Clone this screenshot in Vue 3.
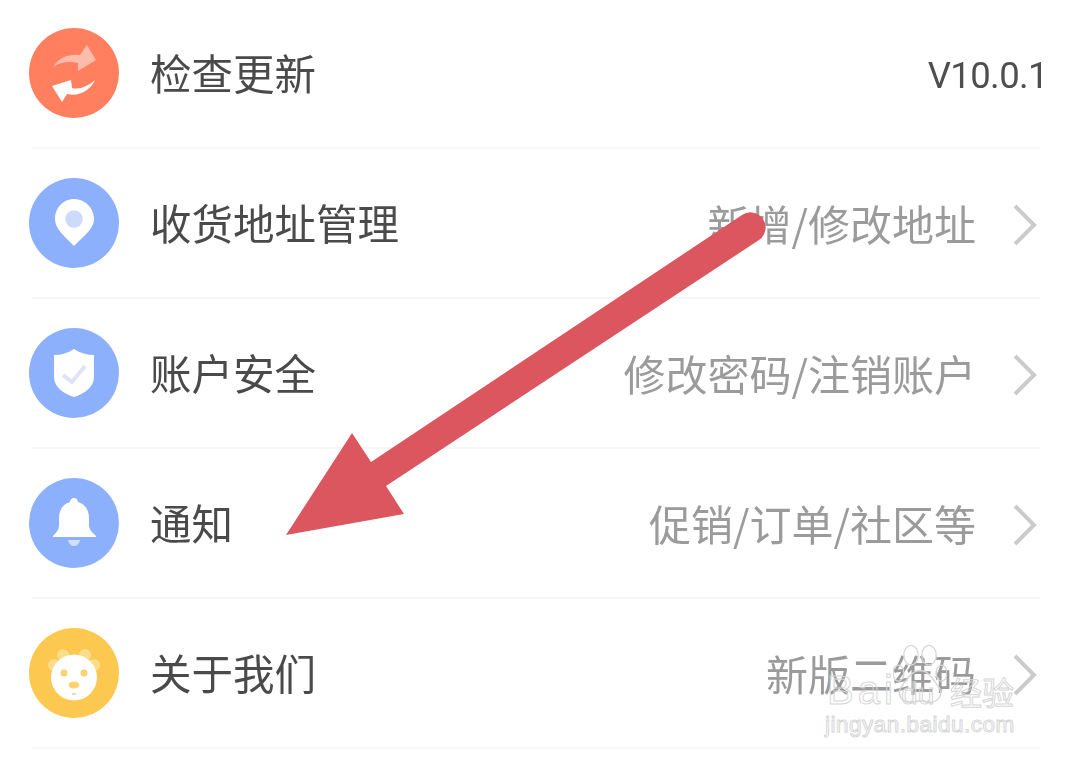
<script setup>
const rows = [
  { id: 'refresh', title: '检查更新', value: 'V10.0.1', version: true },
  { id: 'pin', title: '收货地址管理', value: '新增/修改地址' },
  { id: 'shield', title: '账户安全', value: '修改密码/注销账户' },
  { id: 'bell', title: '通知', value: '促销/订单/社区等' },
  { id: 'bear', title: '关于我们', value: '新版二维码' },
]
</script>

<template>
  <div class="page">
    <div class="list">
      <div v-for="row in rows" :key="row.id" class="row">
        <svg class="icon" viewBox="0 0 90 90" aria-hidden="true">
          <template v-if="row.id === 'refresh'">
            <circle cx="45" cy="45" r="45" fill="#ff7f5f" />
            <path d="M24 39C30 29 40 26 51 27L58 17L67 32L49 43L49 35C40 33 31 34 24 39Z" fill="#ffbcab" />
            <path d="M23 58L42 52L43 60C50 62 60 58 66 52C62 62 50 69 38 66L33 74Z" fill="#fff" />
          </template>
          <template v-else-if="row.id === 'pin'">
            <circle cx="45" cy="45" r="45" fill="#8cb0fb" />
            <path d="M45 21C56 21 65 30 65 41C65 50 57 56 45 68C33 56 26 50 26 41C26 30 34 21 45 21Z" fill="#fff" />
            <circle cx="45" cy="41" r="8.700" fill="#ccdafb" />
          </template>
          <template v-else-if="row.id === 'shield'">
            <circle cx="45" cy="45" r="45" fill="#8cb0fb" />
            <path d="M45 21C51 25 58 27 65 27V49C65 59 55 66 45 69C35 66 25 59 25 49V27C32 27 39 25 45 21Z" fill="#fff" />
            <path d="M34 47L43 54L56 38" fill="none" stroke="#e0e2f6" stroke-width="4" />
          </template>
          <template v-else-if="row.id === 'bell'">
            <circle cx="45" cy="45" r="45" fill="#8cb0fb" />
            <path d="M45 20C47.500 20 49 22 49 24C56 26 60 32 60 40V47C60 52 64 55 67 58V59H24V58C27 55 30 52 30 47V40C30 32 34 26 41 24C41 22 42.500 20 45 20Z" fill="#fff" />
            <path d="M39 62H51C50 66 48 68 45 68C42 68 40 66 39 62Z" fill="#d4e0fb" />
          </template>
          <template v-else>
            <circle cx="45" cy="45" r="45" fill="#fcc84f" />
            <circle cx="25" cy="37" r="6" fill="#fddc8b" />
            <circle cx="65" cy="37" r="6" fill="#fddc8b" />
            <circle cx="34" cy="27" r="6" fill="#fddc8b" />
            <circle cx="56" cy="27" r="6" fill="#fddc8b" />
            <circle cx="45" cy="49.500" r="23" fill="#fff" />
            <circle cx="35" cy="45" r="3.500" fill="#fcd271" />
            <circle cx="55" cy="45" r="3.500" fill="#fcd271" />
            <ellipse cx="45" cy="57" rx="5.500" ry="3.500" fill="#fcd271" />
            <rect x="43" y="65.500" width="4" height="1" fill="#c9b78a" />
          </template>
        </svg>
        <span class="title">{{ row.title }}</span>
        <span class="value" :class="{ version: row.version }">{{ row.value }}</span>
        <svg v-if="!row.version" class="chevron" viewBox="0 0 24 42" aria-hidden="true">
          <path d="M2 2L21 21L2 40" fill="none" stroke="#cbcbcb" stroke-width="4" />
        </svg>
      </div>
    </div>

    <div class="mark">
      <svg class="paw" viewBox="0 0 60 70" aria-hidden="true">
        <g fill="none" stroke="#d6d6d6" stroke-width="1.500">
          <ellipse cx="20" cy="13" rx="8" ry="11" />
          <ellipse cx="40" cy="13" rx="8" ry="11" />
          <ellipse cx="6" cy="33" rx="6" ry="9" />
          <ellipse cx="54" cy="33" rx="6" ry="9" />
          <path d="M30 30C40 30 46 42 52 50C56 60 46 68 38 65C32 63 28 63 22 65C14 68 4 60 8 50C14 42 20 30 30 30Z" />
        </g>
      </svg>
      <span class="bai">Bai</span>
      <span class="du">du</span>
      <span class="jing">经验</span>
      <span class="url">jingyan.baidu.com</span>
    </div>

    <svg class="arrow" viewBox="0 0 1076 760" aria-hidden="true">
      <path d="M286 535L352 433L371 462L742 215A15 15 0 0 1 759 240L386 486L404 514Z" fill="#dc5660" />
    </svg>
  </div>
</template>

<style>
html, body { margin: 0; background: #fff; }
</style>

<style scoped>
.page {
  position: relative;
  width: 1076px;
  height: 760px;
  overflow: hidden;
  background: #fff;
  font-family: "Noto Sans CJK SC", "Noto Sans", sans-serif;
}
.list {
  display: flex;
  flex-direction: column;
  margin-top: -1px;
  padding: 0 36px 0 32px;
  filter: blur(0.6px);
}
.row {
  display: flex;
  align-items: center;
  box-sizing: border-box;
  height: 150px;
  border-bottom: 2px solid #f6f6f6;
}
.icon {
  width: 90px;
  height: 90px;
  margin-left: -3px;
  flex: none;
}
.title {
  margin-left: 31px;
  margin-bottom: 3px;
  font-size: 41.500px;
  color: #4a4a4a;
  flex: 1;
}
.value {
  margin-bottom: 2px;
  font-size: 42px;
  color: #9b9b9b;
}
.value.version {
  margin-top: 4px;
  margin-bottom: 0;
  margin-right: -8px;
  font-family: Roboto, sans-serif;
  font-size: 36.500px;
  letter-spacing: -0.6px;
  color: #4f4f4f;
}
.chevron {
  width: 24px;
  height: 42px;
  margin-top: 3px;
  margin-left: 37px;
  margin-right: 3px;
  flex: none;
}
.mark {
  position: absolute;
  left: 820px;
  top: 640px;
  width: 210px;
  height: 100px;
}
.paw {
  position: absolute;
  left: 73px;
  top: 3px;
  width: 54px;
  height: 64px;
}
.bai, .du, .jing, .url {
  position: absolute;
  color: transparent;
  -webkit-text-stroke: 1px #d6d6d6;
  font-family: "Liberation Sans", sans-serif;
  white-space: nowrap;
}
.bai { left: 7px; top: 28px; font-size: 40px; letter-spacing: 4px; }
.du { left: 81px; top: 37px; font-size: 30px; }
.jing { left: 130px; top: 32px; font-size: 32px; font-family: "Noto Sans CJK SC", sans-serif; line-height: 1.200; }
.url { left: 5px; top: 72px; font-size: 22.500px; letter-spacing: 0.5px; }
.arrow {
  position: absolute;
  inset: 0;
  width: 1076px;
  height: 760px;
}
</style>
